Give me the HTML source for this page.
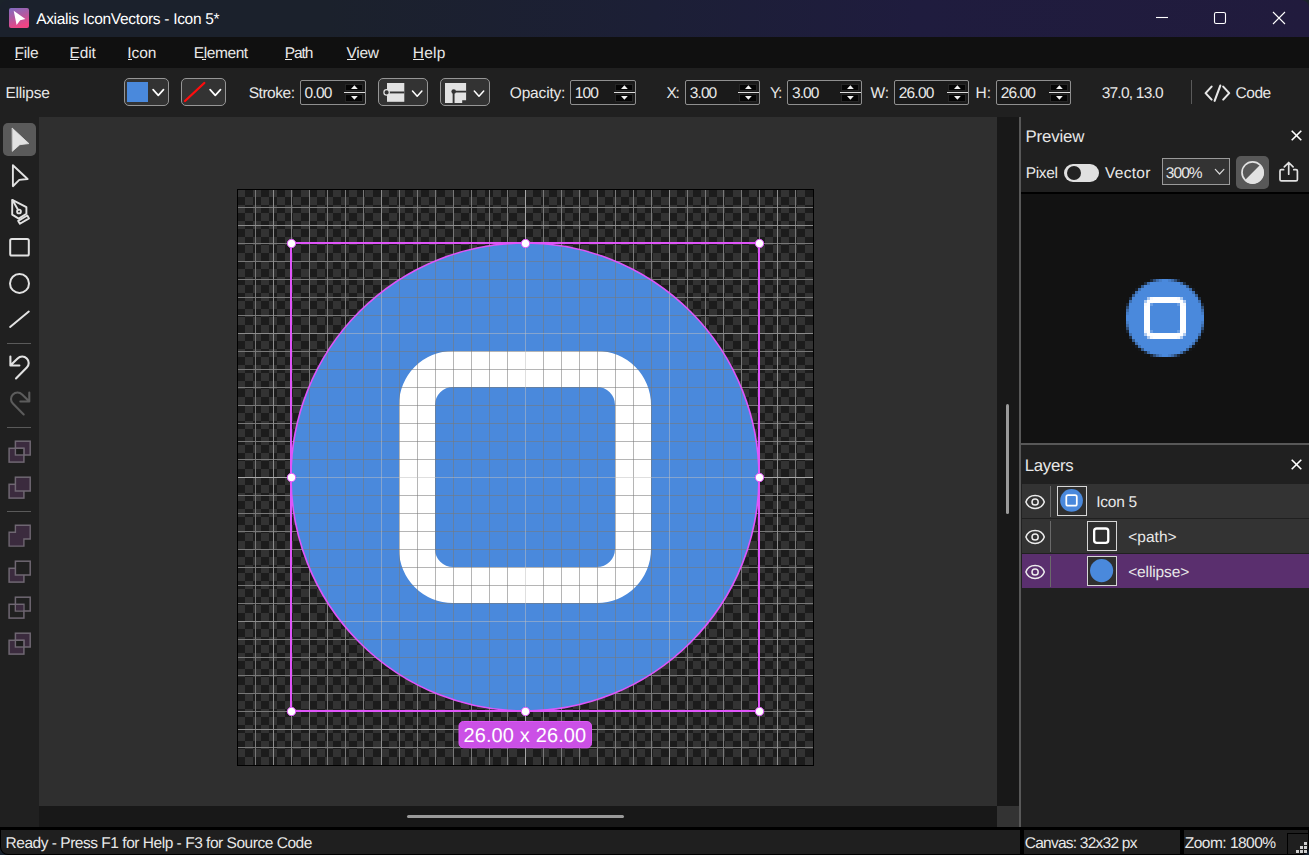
<!DOCTYPE html>
<html lang="en">
<head>
<meta charset="utf-8">
<title>Axialis IconVectors - Icon 5*</title>
<style>
html,body{margin:0;padding:0;}
body{width:1309px;height:855px;position:relative;overflow:hidden;background:#000;font-family:"Liberation Sans",sans-serif;}
.a{position:absolute;}
.tx{position:absolute;white-space:pre;line-height:20px;text-rendering:geometricPrecision;}
.tx u{text-decoration:underline;text-decoration-thickness:1px;text-underline-offset:1.5px;}
.dd{position:absolute;top:78px;height:26px;border:1px solid #969696;border-radius:5px;background:#333;}
.sp{position:absolute;top:80px;height:23px;border:1px solid #8f8f8f;border-radius:2px;background:#1a1a1a;}
.sp i{position:absolute;right:2px;width:18px;background:#050505;box-shadow:inset 0 0 0 1px #252525;}
.sp i.u{top:3px;height:7px;}
.sp i.d{top:13px;height:8px;}
.sp b{position:absolute;right:0;top:11px;width:21px;height:1px;background:#dcdcdc;}
.sp svg{position:absolute;right:2px;top:3px;}
</style>
</head>
<body>
<!-- title bar -->
<div class="a" style="left:0;top:0;width:12px;height:12px;background:#1b232b"></div><div class="a" style="left:1297px;top:0;width:12px;height:12px;background:#1b232b"></div><div class="a" style="left:0;top:843px;width:12px;height:12px;background:#1a2430"></div><div class="a" style="left:1297px;top:843px;width:12px;height:12px;background:#1a2430"></div>
<div class="a" id="titlebar" style="left:0;top:0;width:1309px;height:37px;background:linear-gradient(90deg,#1b212c 0%,#1b212c 25%,#1c1f36 50%,#1f1c3e 70%,#211b3d 100%);border-radius:8px 8px 0 0;"></div>
<svg class="a" style="left:9px;top:8px" width="20" height="20" viewBox="0 0 20 20">
<defs><linearGradient id="lg" x1="0" y1="0" x2="0.35" y2="1"><stop offset="0" stop-color="#7f6dc2"/><stop offset="0.5" stop-color="#b05aa2"/><stop offset="1" stop-color="#ee4585"/></linearGradient></defs>
<rect x="0" y="0" width="20" height="20" rx="2" fill="url(#lg)"/>
<path d="M4.7 2.7 L16.4 10.9 L11.2 12.2 L7.6 17.1 Z" fill="#fff"/>
</svg>
<!-- window buttons -->
<svg class="a" style="left:1150px;top:6px" width="150" height="26" viewBox="1150 6 150 26" fill="none" stroke="#fff" stroke-width="1.1">
<path d="M1156 17.5H1168"/>
<rect x="1214.5" y="12.5" width="11" height="11" rx="1.6"/>
<path d="M1273 12L1285 24M1285 12L1273 24"/>
</svg>
<!-- menu bar -->
<div class="a" style="left:0;top:37px;width:1309px;height:31px;background:#101010;"></div>
<!-- toolbar -->
<div class="a" style="left:0;top:68px;width:1309px;height:49px;background:#202020;"></div>
<!-- left tools -->
<div class="a" style="left:0;top:117px;width:39px;height:710px;background:#202020;"></div>
<!-- canvas area -->
<div class="a" style="left:39px;top:117px;width:958px;height:689px;background:#2f2f2f;"></div>
<!-- scrollbars -->
<div class="a" style="left:997px;top:117px;width:22px;height:689px;background:#181818;"></div>
<div class="a" style="left:39px;top:806px;width:958px;height:21px;background:#181818;"></div>
<div class="a" style="left:997px;top:806px;width:22px;height:21px;background:#333;"></div>
<div class="a" style="left:1006px;top:404px;width:3px;height:110px;background:#9a9a9a;border-radius:2px;"></div>
<div class="a" style="left:407px;top:815px;width:217px;height:3px;background:#9a9a9a;border-radius:2px;"></div>
<!-- splitter -->
<div class="a" style="left:1019px;top:117px;width:2px;height:710px;background:#585858;"></div>
<!-- right panel -->
<div class="a" style="left:1021px;top:117px;width:288px;height:710px;background:#202020;"></div>
<div class="a" style="left:1021px;top:192px;width:288px;height:2px;background:#000;"></div>
<div class="a" style="left:1021px;top:194px;width:288px;height:249px;background:#121212;"></div>
<div class="a" style="left:1021px;top:443px;width:288px;height:2px;background:#585858;"></div>
<div class="a" style="left:1064px;top:164px;width:35px;height:18px;border-radius:9px;background:#e0e0e0"></div>
<div class="a" style="left:1066.5px;top:166px;width:14px;height:14px;border-radius:7px;background:#222"></div>
<div class="a" style="left:1162px;top:158px;width:66px;height:25px;border:1px solid #9a9a9a;background:#333"></div>
<div class="a" style="left:1236px;top:156px;width:33px;height:33px;border-radius:5px;background:#585858"></div>
<svg class="a" style="left:1150px;top:120px" width="159" height="75" viewBox="1150 120 159 75" fill="none" stroke-linecap="round" stroke-linejoin="round">
<path d="M1215.3 169.39999999999998L1219.6 174.0L1223.8999999999999 169.39999999999998" fill="none" stroke="#d8d8d8" stroke-width="1.2" stroke-linecap="round" stroke-linejoin="round"/>
<path d="M1244.6 180.5A11.2 11.2 0 0 0 1260.5 164.6Z" fill="#e2e2e2"/><circle cx="1252.6" cy="172.5" r="10.6" stroke="#e2e2e2" stroke-width="1.7"/>
<path d="M1283.6 169.7H1281.4Q1280 169.7 1280 171.1V179.4Q1280 180.8 1281.4 180.8H1296Q1297.4 180.8 1297.4 179.4V171.1Q1297.4 169.7 1296 169.7H1293.8M1288.7 174.2V162.8M1284.3 166.9L1288.7 162.5L1293.1 166.9" stroke="#e2e2e2" stroke-width="1.7"/>
<path d="M1291.7 130.7L1301.3 140.3M1301.3 130.7L1291.7 140.3" stroke="#fff" stroke-width="1.6" stroke-linecap="butt"/>
</svg>
<svg class="a" style="left:1117px;top:270px" width="96" height="96" viewBox="0 0 32 32" shape-rendering="crispEdges"><rect x="11" y="3" width="1" height="1" fill="#1c2838"/><rect x="12" y="3" width="1" height="1" fill="#2f4f7a"/><rect x="13" y="3" width="1" height="1" fill="#3d6dad"/><rect x="14" y="3" width="1" height="1" fill="#457ec9"/><rect x="15" y="3" width="2" height="1" fill="#4a89dc"/><rect x="17" y="3" width="1" height="1" fill="#457ec9"/><rect x="18" y="3" width="1" height="1" fill="#3d6dad"/><rect x="19" y="3" width="1" height="1" fill="#2f4f7a"/><rect x="20" y="3" width="1" height="1" fill="#1c2838"/><rect x="9" y="4" width="1" height="1" fill="#203044"/><rect x="10" y="4" width="1" height="1" fill="#3e6fb0"/><rect x="11" y="4" width="10" height="1" fill="#4a89dc"/><rect x="21" y="4" width="1" height="1" fill="#3e6fb0"/><rect x="22" y="4" width="1" height="1" fill="#203044"/><rect x="7" y="5" width="1" height="1" fill="#15181b"/><rect x="8" y="5" width="1" height="1" fill="#345b8d"/><rect x="9" y="5" width="14" height="1" fill="#4a89dc"/><rect x="23" y="5" width="1" height="1" fill="#345b8d"/><rect x="24" y="5" width="1" height="1" fill="#15181b"/><rect x="6" y="6" width="1" height="1" fill="#171d25"/><rect x="7" y="6" width="1" height="1" fill="#3e6fb0"/><rect x="8" y="6" width="16" height="1" fill="#4a89dc"/><rect x="24" y="6" width="1" height="1" fill="#3e6fb0"/><rect x="25" y="6" width="1" height="1" fill="#171d25"/><rect x="5" y="7" width="1" height="1" fill="#15181b"/><rect x="6" y="7" width="1" height="1" fill="#3e6fb0"/><rect x="7" y="7" width="18" height="1" fill="#4a89dc"/><rect x="25" y="7" width="1" height="1" fill="#3e6fb0"/><rect x="26" y="7" width="1" height="1" fill="#15181b"/><rect x="5" y="8" width="1" height="1" fill="#345b8d"/><rect x="6" y="8" width="20" height="1" fill="#4a89dc"/><rect x="26" y="8" width="1" height="1" fill="#345b8d"/><rect x="4" y="9" width="1" height="1" fill="#203044"/><rect x="5" y="9" width="4" height="1" fill="#4a89dc"/><rect x="9" y="9" width="1" height="1" fill="#4d8bdd"/><rect x="10" y="9" width="1" height="1" fill="#b0cbf0"/><rect x="11" y="9" width="1" height="1" fill="#f7f9fd"/><rect x="12" y="9" width="8" height="1" fill="#ffffff"/><rect x="20" y="9" width="1" height="1" fill="#f7f9fd"/><rect x="21" y="9" width="1" height="1" fill="#b0cbf0"/><rect x="22" y="9" width="1" height="1" fill="#4d8bdd"/><rect x="23" y="9" width="4" height="1" fill="#4a89dc"/><rect x="27" y="9" width="1" height="1" fill="#203044"/><rect x="4" y="10" width="1" height="1" fill="#3e6fb0"/><rect x="5" y="10" width="4" height="1" fill="#4a89dc"/><rect x="9" y="10" width="1" height="1" fill="#b0cbf0"/><rect x="10" y="10" width="12" height="1" fill="#ffffff"/><rect x="22" y="10" width="1" height="1" fill="#b0cbf0"/><rect x="23" y="10" width="4" height="1" fill="#4a89dc"/><rect x="27" y="10" width="1" height="1" fill="#3e6fb0"/><rect x="3" y="11" width="1" height="1" fill="#1c2838"/><rect x="4" y="11" width="5" height="1" fill="#4a89dc"/><rect x="9" y="11" width="1" height="1" fill="#f7f9fd"/><rect x="10" y="11" width="1" height="1" fill="#ffffff"/><rect x="11" y="11" width="1" height="1" fill="#6c9fe3"/><rect x="12" y="11" width="8" height="1" fill="#4a89dc"/><rect x="20" y="11" width="1" height="1" fill="#6c9fe3"/><rect x="21" y="11" width="1" height="1" fill="#ffffff"/><rect x="22" y="11" width="1" height="1" fill="#f7f9fd"/><rect x="23" y="11" width="5" height="1" fill="#4a89dc"/><rect x="28" y="11" width="1" height="1" fill="#1c2838"/><rect x="3" y="12" width="1" height="1" fill="#2f4f7a"/><rect x="4" y="12" width="5" height="1" fill="#4a89dc"/><rect x="9" y="12" width="2" height="1" fill="#ffffff"/><rect x="11" y="12" width="10" height="1" fill="#4a89dc"/><rect x="21" y="12" width="2" height="1" fill="#ffffff"/><rect x="23" y="12" width="5" height="1" fill="#4a89dc"/><rect x="28" y="12" width="1" height="1" fill="#2f4f7a"/><rect x="3" y="13" width="1" height="1" fill="#3d6dad"/><rect x="4" y="13" width="5" height="1" fill="#4a89dc"/><rect x="9" y="13" width="2" height="1" fill="#ffffff"/><rect x="11" y="13" width="10" height="1" fill="#4a89dc"/><rect x="21" y="13" width="2" height="1" fill="#ffffff"/><rect x="23" y="13" width="5" height="1" fill="#4a89dc"/><rect x="28" y="13" width="1" height="1" fill="#3d6dad"/><rect x="3" y="14" width="1" height="1" fill="#457ec9"/><rect x="4" y="14" width="5" height="1" fill="#4a89dc"/><rect x="9" y="14" width="2" height="1" fill="#ffffff"/><rect x="11" y="14" width="10" height="1" fill="#4a89dc"/><rect x="21" y="14" width="2" height="1" fill="#ffffff"/><rect x="23" y="14" width="5" height="1" fill="#4a89dc"/><rect x="28" y="14" width="1" height="1" fill="#457ec9"/><rect x="3" y="15" width="6" height="1" fill="#4a89dc"/><rect x="9" y="15" width="2" height="1" fill="#ffffff"/><rect x="11" y="15" width="10" height="1" fill="#4a89dc"/><rect x="21" y="15" width="2" height="1" fill="#ffffff"/><rect x="23" y="15" width="6" height="1" fill="#4a89dc"/><rect x="3" y="16" width="6" height="1" fill="#4a89dc"/><rect x="9" y="16" width="2" height="1" fill="#ffffff"/><rect x="11" y="16" width="10" height="1" fill="#4a89dc"/><rect x="21" y="16" width="2" height="1" fill="#ffffff"/><rect x="23" y="16" width="6" height="1" fill="#4a89dc"/><rect x="3" y="17" width="1" height="1" fill="#457ec9"/><rect x="4" y="17" width="5" height="1" fill="#4a89dc"/><rect x="9" y="17" width="2" height="1" fill="#ffffff"/><rect x="11" y="17" width="10" height="1" fill="#4a89dc"/><rect x="21" y="17" width="2" height="1" fill="#ffffff"/><rect x="23" y="17" width="5" height="1" fill="#4a89dc"/><rect x="28" y="17" width="1" height="1" fill="#457ec9"/><rect x="3" y="18" width="1" height="1" fill="#3d6dad"/><rect x="4" y="18" width="5" height="1" fill="#4a89dc"/><rect x="9" y="18" width="2" height="1" fill="#ffffff"/><rect x="11" y="18" width="10" height="1" fill="#4a89dc"/><rect x="21" y="18" width="2" height="1" fill="#ffffff"/><rect x="23" y="18" width="5" height="1" fill="#4a89dc"/><rect x="28" y="18" width="1" height="1" fill="#3d6dad"/><rect x="3" y="19" width="1" height="1" fill="#2f4f7a"/><rect x="4" y="19" width="5" height="1" fill="#4a89dc"/><rect x="9" y="19" width="2" height="1" fill="#ffffff"/><rect x="11" y="19" width="10" height="1" fill="#4a89dc"/><rect x="21" y="19" width="2" height="1" fill="#ffffff"/><rect x="23" y="19" width="5" height="1" fill="#4a89dc"/><rect x="28" y="19" width="1" height="1" fill="#2f4f7a"/><rect x="3" y="20" width="1" height="1" fill="#1c2838"/><rect x="4" y="20" width="5" height="1" fill="#4a89dc"/><rect x="9" y="20" width="1" height="1" fill="#f7f9fd"/><rect x="10" y="20" width="1" height="1" fill="#ffffff"/><rect x="11" y="20" width="1" height="1" fill="#6c9fe3"/><rect x="12" y="20" width="8" height="1" fill="#4a89dc"/><rect x="20" y="20" width="1" height="1" fill="#6c9fe3"/><rect x="21" y="20" width="1" height="1" fill="#ffffff"/><rect x="22" y="20" width="1" height="1" fill="#f7f9fd"/><rect x="23" y="20" width="5" height="1" fill="#4a89dc"/><rect x="28" y="20" width="1" height="1" fill="#1c2838"/><rect x="4" y="21" width="1" height="1" fill="#3e6fb0"/><rect x="5" y="21" width="4" height="1" fill="#4a89dc"/><rect x="9" y="21" width="1" height="1" fill="#b0cbf0"/><rect x="10" y="21" width="12" height="1" fill="#ffffff"/><rect x="22" y="21" width="1" height="1" fill="#b0cbf0"/><rect x="23" y="21" width="4" height="1" fill="#4a89dc"/><rect x="27" y="21" width="1" height="1" fill="#3e6fb0"/><rect x="4" y="22" width="1" height="1" fill="#203044"/><rect x="5" y="22" width="4" height="1" fill="#4a89dc"/><rect x="9" y="22" width="1" height="1" fill="#4d8bdd"/><rect x="10" y="22" width="1" height="1" fill="#b0cbf0"/><rect x="11" y="22" width="1" height="1" fill="#f7f9fd"/><rect x="12" y="22" width="8" height="1" fill="#ffffff"/><rect x="20" y="22" width="1" height="1" fill="#f7f9fd"/><rect x="21" y="22" width="1" height="1" fill="#b0cbf0"/><rect x="22" y="22" width="1" height="1" fill="#4d8bdd"/><rect x="23" y="22" width="4" height="1" fill="#4a89dc"/><rect x="27" y="22" width="1" height="1" fill="#203044"/><rect x="5" y="23" width="1" height="1" fill="#345b8d"/><rect x="6" y="23" width="20" height="1" fill="#4a89dc"/><rect x="26" y="23" width="1" height="1" fill="#345b8d"/><rect x="5" y="24" width="1" height="1" fill="#15181b"/><rect x="6" y="24" width="1" height="1" fill="#3e6fb0"/><rect x="7" y="24" width="18" height="1" fill="#4a89dc"/><rect x="25" y="24" width="1" height="1" fill="#3e6fb0"/><rect x="26" y="24" width="1" height="1" fill="#15181b"/><rect x="6" y="25" width="1" height="1" fill="#171d25"/><rect x="7" y="25" width="1" height="1" fill="#3e6fb0"/><rect x="8" y="25" width="16" height="1" fill="#4a89dc"/><rect x="24" y="25" width="1" height="1" fill="#3e6fb0"/><rect x="25" y="25" width="1" height="1" fill="#171d25"/><rect x="7" y="26" width="1" height="1" fill="#15181b"/><rect x="8" y="26" width="1" height="1" fill="#345b8d"/><rect x="9" y="26" width="14" height="1" fill="#4a89dc"/><rect x="23" y="26" width="1" height="1" fill="#345b8d"/><rect x="24" y="26" width="1" height="1" fill="#15181b"/><rect x="9" y="27" width="1" height="1" fill="#203044"/><rect x="10" y="27" width="1" height="1" fill="#3e6fb0"/><rect x="11" y="27" width="10" height="1" fill="#4a89dc"/><rect x="21" y="27" width="1" height="1" fill="#3e6fb0"/><rect x="22" y="27" width="1" height="1" fill="#203044"/><rect x="11" y="28" width="1" height="1" fill="#1c2838"/><rect x="12" y="28" width="1" height="1" fill="#2f4f7a"/><rect x="13" y="28" width="1" height="1" fill="#3d6dad"/><rect x="14" y="28" width="1" height="1" fill="#457ec9"/><rect x="15" y="28" width="2" height="1" fill="#4a89dc"/><rect x="17" y="28" width="1" height="1" fill="#457ec9"/><rect x="18" y="28" width="1" height="1" fill="#3d6dad"/><rect x="19" y="28" width="1" height="1" fill="#2f4f7a"/><rect x="20" y="28" width="1" height="1" fill="#1c2838"/></svg>
<div class="a" style="left:1022px;top:484px;width:287px;height:34px;background:#333"></div>
<div class="a" style="left:1050px;top:486px;width:1px;height:31px;background:#6a6a6a"></div>
<div class="a" style="left:1022px;top:519px;width:287px;height:34px;background:#333"></div>
<div class="a" style="left:1050px;top:521px;width:1px;height:31px;background:#6a6a6a"></div>
<div class="a" style="left:1022px;top:554px;width:287px;height:34px;background:#5a2f6e"></div>
<div class="a" style="left:1050px;top:556px;width:1px;height:31px;background:#6a6a6a"></div>
<svg class="a" style="left:1021px;top:445px" width="288" height="150" viewBox="1021 445 288 150" fill="none" stroke="#ececec" stroke-width="1.5" stroke-linejoin="round">
<path d="M1025.8999999999999 502C1028.8999999999999 493.4 1041.3 493.4 1044.3 502C1041.3 510.6 1028.8999999999999 510.6 1025.8999999999999 502Z"/><circle cx="1035.1" cy="502" r="3.1"/>
<path d="M1025.8999999999999 537C1028.8999999999999 528.4 1041.3 528.4 1044.3 537C1041.3 545.6 1028.8999999999999 545.6 1025.8999999999999 537Z"/><circle cx="1035.1" cy="537" r="3.1"/>
<path d="M1025.8999999999999 572C1028.8999999999999 563.4 1041.3 563.4 1044.3 572C1041.3 580.6 1028.8999999999999 580.6 1025.8999999999999 572Z"/><circle cx="1035.1" cy="572" r="3.1"/>
<path d="M1291.7 459.7L1301.3 469.3M1301.3 459.7L1291.7 469.3" stroke="#fff" stroke-width="1.6"/>
</svg>
<svg class="a" style="left:1057px;top:486px" width="30" height="30" viewBox="0 0 30 30"><rect x="0.5" y="0.5" width="29" height="29" fill="#2f2f2f" stroke="#d6d6d6" stroke-width="1"/><g transform="translate(0.55 0.45) scale(0.875)"><circle cx="16" cy="16" r="13" fill="#4a89dc"/><rect x="10" y="10" width="12" height="12" rx="2" fill="none" stroke="#fff" stroke-width="2"/></g></svg>
<svg class="a" style="left:1087px;top:521px" width="30" height="30" viewBox="0 0 30 30"><rect x="0.5" y="0.5" width="29" height="29" fill="#2f2f2f" stroke="#d6d6d6" stroke-width="1"/><rect x="7.15" y="7.5" width="14.1" height="14.3" rx="2.6" fill="none" stroke="#fff" stroke-width="2.3"/></svg>
<svg class="a" style="left:1087px;top:556px" width="30" height="30" viewBox="0 0 30 30"><rect x="0.5" y="0.5" width="29" height="29" fill="#2f2f2f" stroke="#d6d6d6" stroke-width="1"/><circle cx="14.6" cy="14.6" r="11.6" fill="#4a89dc"/></svg>
<!-- status -->
<div class="a" style="left:0;top:827px;width:1309px;height:28px;background:#000;border-radius:0 0 8px 8px;"></div>
<div class="a" style="left:1px;top:830px;width:1019px;height:24px;background:#1f1f1f;border-radius:0 0 0 7px;"></div>
<div class="a" style="left:1024px;top:830px;width:156px;height:24px;background:#1f1f1f;"></div>
<div class="a" style="left:1184px;top:830px;width:124px;height:24px;background:#1f1f1f;border-radius:0 0 7px 0;"></div>
<div class="a" style="left:1287px;top:833px;width:21px;height:1px;background:#000"></div><div class="a" style="left:1287px;top:833px;width:1px;height:21px;background:#000"></div><svg class="a" style="left:1288px;top:834px" width="21" height="21" viewBox="1288 834 21 21" shape-rendering="crispEdges" fill="#cfcfcf"><rect x="1304" y="842" width="3" height="3"/><rect x="1300" y="846" width="3" height="3"/><rect x="1304" y="846" width="3" height="3"/><rect x="1296" y="850" width="3" height="3"/><rect x="1300" y="850" width="3" height="3"/><rect x="1304" y="850" width="3" height="3"/></svg><div class="a" style="left:15px;top:59px;width:7px;height:1px;background:#e8e8e8"></div><div class="a" style="left:70px;top:59px;width:8px;height:1px;background:#e8e8e8"></div><div class="a" style="left:128px;top:59px;width:4px;height:1px;background:#e8e8e8"></div><div class="a" style="left:202px;top:59px;width:4px;height:1px;background:#e8e8e8"></div><div class="a" style="left:285px;top:59px;width:7px;height:1px;background:#e8e8e8"></div><div class="a" style="left:347px;top:59px;width:9px;height:1px;background:#e8e8e8"></div><div class="a" style="left:413px;top:59px;width:11px;height:1px;background:#e8e8e8"></div>
<div class="dd" style="left:124px;width:43px"></div>
<div class="dd" style="left:181px;width:43px"></div>
<div class="dd" style="left:378px;width:48px"></div>
<div class="dd" style="left:440px;width:48px"></div>
<div class="sp" style="left:300px;width:64px"><i class="u"></i><i class="d"></i><b></b></div>
<div class="sp" style="left:570px;width:64px"><i class="u"></i><i class="d"></i><b></b></div>
<div class="sp" style="left:685px;width:73px"><i class="u"></i><i class="d"></i><b></b></div>
<div class="sp" style="left:787px;width:73px"><i class="u"></i><i class="d"></i><b></b></div>
<div class="sp" style="left:894px;width:73px"><i class="u"></i><i class="d"></i><b></b></div>
<div class="sp" style="left:996px;width:73px"><i class="u"></i><i class="d"></i><b></b></div>
<svg class="a" style="left:0;top:68px" width="1309" height="49" viewBox="0 68 1309 49">
<rect x="127" y="82" width="21" height="20" fill="#4a89dc"/>
<path d="M153.10000000000002 89.7L158.3 95.3L163.5 89.7" fill="none" stroke="#fff" stroke-width="1.7" stroke-linecap="round" stroke-linejoin="round"/>
<path d="M185 101L204.3 83" stroke="#ff0d0d" stroke-width="2.3" stroke-linecap="round"/>
<path d="M210.10000000000002 89.7L215.3 95.3L220.5 89.7" fill="none" stroke="#fff" stroke-width="1.7" stroke-linecap="round" stroke-linejoin="round"/>
<rect x="387" y="83" width="17.3" height="18.8" fill="#e2e2e2"/>
<rect x="387" y="91.5" width="17.3" height="1.9" fill="#333"/>
<circle cx="386.6" cy="92.4" r="2.7" fill="#333" stroke="#e2e2e2" stroke-width="1.2"/>
<path d="M412.5 91.0L417.2 96.19999999999999L421.9 91.0" fill="none" stroke="#fff" stroke-width="1.5" stroke-linecap="round" stroke-linejoin="round"/>
<path d="M445 83H466.1V100.3H462.2V103H445Z" fill="#e2e2e2"/>
<path d="M453.6 103V91.6H466.1" fill="none" stroke="#333" stroke-width="1.9"/>
<circle cx="453.7" cy="91.5" r="2.3" fill="#333"/>
<path d="M474.3 91.0L479 96.19999999999999L483.7 91.0" fill="none" stroke="#fff" stroke-width="1.5" stroke-linecap="round" stroke-linejoin="round"/>
<path d="M351.0 89L354.4 85.3L357.79999999999995 89Z M351.0 96L354.4 99.7L357.79999999999995 96Z" fill="#f0f0f0"/>
<path d="M621.0 89L624.4 85.3L627.8 89Z M621.0 96L624.4 99.7L627.8 96Z" fill="#f0f0f0"/>
<path d="M745.0 89L748.4 85.3L751.8 89Z M745.0 96L748.4 99.7L751.8 96Z" fill="#f0f0f0"/>
<path d="M847.0 89L850.4 85.3L853.8 89Z M847.0 96L850.4 99.7L853.8 96Z" fill="#f0f0f0"/>
<path d="M954.0 89L957.4 85.3L960.8 89Z M954.0 96L957.4 99.7L960.8 96Z" fill="#f0f0f0"/>
<path d="M1056.0 89L1059.4 85.3L1062.8000000000002 89Z M1056.0 96L1059.4 99.7L1062.8000000000002 96Z" fill="#f0f0f0"/>
<rect x="1191" y="80" width="1" height="24" fill="#5a5a5a"/>
<path d="M1211.6 86.6L1205.6 93.1L1211.6 99.6M1223.2 86.6L1229.2 93.1L1223.2 99.6M1220.3 85.6L1214.6 100.8" fill="none" stroke="#e6e6e6" stroke-width="2.1" stroke-linecap="round" stroke-linejoin="round"/>
</svg>
<div class="a" style="left:3px;top:123px;width:33px;height:33px;border-radius:5px;background:#5a5a5a"></div>
<svg class="a" style="left:0;top:117px" width="39" height="710" viewBox="0 117 39 710" fill="none" stroke-linecap="round" stroke-linejoin="round">
<path d="M12.4 128.3L28.9 143.6L19.8 144.7L12.6 151.1Z" fill="#e2e2e2" stroke="#e2e2e2" stroke-width="0.8"/>
<path d="M12.9 165.3L27.6 179L19.3 179.9L12.9 186.2Z" stroke="#e2e2e2" stroke-width="1.9"/>
<g stroke="#e2e2e2" stroke-width="1.9"><path d="M12.2 199.9L26.4 207.2V213.8L18.7 218.6L12.2 214.6Z"/><path d="M12.6 200.2L18 209.8"/><circle cx="19" cy="211.5" r="1.9"/><path d="M18.2 220.9L27.3 215.5L29 218.4L19.9 223.8Z"/></g>
<rect x="10.2" y="239" width="18.6" height="16.6" rx="1.6" stroke="#e2e2e2" stroke-width="2"/>
<circle cx="19.5" cy="283.4" r="9.5" stroke="#e2e2e2" stroke-width="2"/>
<path d="M10.1 326.9L28.8 311.6" stroke="#e2e2e2" stroke-width="2"/>
<path d="M7 343.5H31M7 427.5H31M7 511.5H31" stroke="#5a5a5a" stroke-width="1" stroke-linecap="butt" shape-rendering="crispEdges"/>
<path d="M10.4 356.6V365.5H19.4M10.6 365.3L17.6 358.4A6.5 6.5 0 0 1 26.8 367.6L16 378.4" stroke="#e2e2e2" stroke-width="2.1"/>
<g transform="translate(39.7 36) scale(-1 1)"><path d="M10.4 356.6V365.5H19.4M10.6 365.3L17.6 358.4A6.5 6.5 0 0 1 26.8 367.6L16 378.4" stroke="#5c5c5c" stroke-width="2.1"/></g>
<rect x="15.4" y="441.2" width="14.8" height="13.8" fill="#3b2b3e" stroke="#6f6772" stroke-width="1.5" stroke-linejoin="miter"/><rect x="9.1" y="448.3" width="14.8" height="13.8" fill="#3b2b3e" stroke="#6f6772" stroke-width="1.5" stroke-linejoin="miter"/><rect x="15.4" y="448.3" width="8.499999999999998" height="6.699999999999989" fill="#1c1c1c" stroke="#6f6772" stroke-width="1.4" stroke-linejoin="miter"/>
<rect x="9.1" y="484.3" width="14.8" height="13.8" fill="#3b2b3e" stroke="#6f6772" stroke-width="1.5" stroke-linejoin="miter"/><rect x="15.4" y="477.2" width="14.8" height="13.8" fill="#3b2b3e" stroke="#6f6772" stroke-width="1.5" stroke-linejoin="miter"/>
<path d="M15.4 525.2H30.200000000000003V539.0H23.9V546.0999999999999H9.1V532.3H15.4Z" fill="#3b2b3e" stroke="#6f6772" stroke-width="1.4" stroke-linejoin="miter"/>
<rect x="9.1" y="568.3" width="14.8" height="13.8" fill="#3b2b3e" stroke="#6f6772" stroke-width="1.5" stroke-linejoin="miter"/><rect x="15.4" y="561.2" width="14.8" height="13.8" fill="#202020" stroke="#6f6772" stroke-width="1.5" stroke-linejoin="miter"/>
<rect x="15.4" y="597.2" width="14.8" height="13.8" fill="none" stroke="#6f6772" stroke-width="1.5" stroke-linejoin="miter"/><rect x="9.1" y="604.3" width="14.8" height="13.8" fill="none" stroke="#6f6772" stroke-width="1.5" stroke-linejoin="miter"/><rect x="16.1" y="605.0" width="7.099999999999998" height="5.300000000000045" fill="#3b2b3e" stroke="none"/>
<rect x="15.4" y="633.2" width="14.8" height="13.8" fill="#3b2b3e" stroke="#6f6772" stroke-width="1.5" stroke-linejoin="miter"/><rect x="9.1" y="640.3" width="14.8" height="13.8" fill="#3b2b3e" stroke="#6f6772" stroke-width="1.5" stroke-linejoin="miter"/><rect x="15.4" y="640.3" width="8.499999999999998" height="6.7000000000000455" fill="#1c1c1c" stroke="#6f6772" stroke-width="1.4" stroke-linejoin="miter"/>
</svg>
<svg class="a" style="left:237px;top:189px" width="577" height="577" viewBox="0 0 577 577">
<defs><pattern id="chk" x="0" y="0" width="16" height="16" patternUnits="userSpaceOnUse"><rect width="16" height="16" fill="#1c1c1c"/><rect width="8" height="8" fill="#333"/><rect x="8" y="8" width="8" height="8" fill="#333"/></pattern><clipPath id="cc"><circle cx="288" cy="288" r="234"/></clipPath></defs>
<rect x="0" y="0" width="577" height="577" fill="url(#chk)"/>
<path d="M18.5 1V576M54.5 1V576M72.5 1V576M90.5 1V576M108.5 1V576M126.5 1V576M162.5 1V576M180.5 1V576M198.5 1V576M216.5 1V576M234.5 1V576M252.5 1V576M270.5 1V576M306.5 1V576M324.5 1V576M342.5 1V576M360.5 1V576M378.5 1V576M396.5 1V576M414.5 1V576M450.5 1V576M468.5 1V576M486.5 1V576M504.5 1V576M522.5 1V576M558.5 1V576M1 18.5H576M1 54.5H576M1 72.5H576M1 90.5H576M1 108.5H576M1 126.5H576M1 162.5H576M1 180.5H576M1 198.5H576M1 216.5H576M1 234.5H576M1 252.5H576M1 270.5H576M1 306.5H576M1 324.5H576M1 342.5H576M1 360.5H576M1 378.5H576M1 396.5H576M1 414.5H576M1 450.5H576M1 468.5H576M1 486.5H576M1 504.5H576M1 522.5H576M1 558.5H576" stroke="#787878" stroke-width="1" fill="none" shape-rendering="crispEdges"/><path d="M36.5 1V576M144.5 1V576M432.5 1V576M540.5 1V576M1 36.5H576M1 144.5H576M1 432.5H576M1 540.5H576" stroke="#8c8c8c" stroke-width="1" fill="none" shape-rendering="crispEdges"/><path d="M288.5 1V576M1 288.5H576" stroke="#a8a8a8" stroke-width="1" fill="none" shape-rendering="crispEdges"/>
<circle cx="288" cy="288" r="234" fill="#4a89dc"/>
<path fill="#fff" fill-rule="evenodd" d="M216 162H360A54 54 0 0 1 414 216V360A54 54 0 0 1 360 414H216A54 54 0 0 1 162 360V216A54 54 0 0 1 216 162ZM216 198H360A18 18 0 0 1 378 216V360A18 18 0 0 1 360 378H216A18 18 0 0 1 198 360V216A18 18 0 0 1 216 198Z"/>
<g clip-path="url(#cc)"><path d="M18.5 1V576M54.5 1V576M72.5 1V576M90.5 1V576M108.5 1V576M126.5 1V576M162.5 1V576M180.5 1V576M198.5 1V576M216.5 1V576M234.5 1V576M252.5 1V576M270.5 1V576M306.5 1V576M324.5 1V576M342.5 1V576M360.5 1V576M378.5 1V576M396.5 1V576M414.5 1V576M450.5 1V576M468.5 1V576M486.5 1V576M504.5 1V576M522.5 1V576M558.5 1V576" stroke="#787878" stroke-opacity="0.55" stroke-width="1" fill="none" shape-rendering="crispEdges"/><path d="M1 18.5H576M1 54.5H576M1 72.5H576M1 90.5H576M1 108.5H576M1 126.5H576M1 162.5H576M1 180.5H576M1 198.5H576M1 216.5H576M1 234.5H576M1 252.5H576M1 270.5H576M1 306.5H576M1 324.5H576M1 342.5H576M1 360.5H576M1 378.5H576M1 396.5H576M1 414.5H576M1 450.5H576M1 468.5H576M1 486.5H576M1 504.5H576M1 522.5H576M1 558.5H576" stroke="#787878" stroke-opacity="0.55" stroke-width="1" fill="none" shape-rendering="crispEdges"/><path d="M36.5 1V576M144.5 1V576M432.5 1V576M540.5 1V576M288.5 1V576" stroke="#c0c0c0" stroke-opacity="0.5" stroke-width="1" fill="none" shape-rendering="crispEdges"/><path d="M1 36.5H576M1 144.5H576M1 432.5H576M1 540.5H576M1 288.5H576" stroke="#c0c0c0" stroke-opacity="0.5" stroke-width="1" fill="none" shape-rendering="crispEdges"/></g>
<rect x="0.5" y="0.5" width="576" height="576" fill="none" stroke="#000" stroke-width="1"/>
<circle cx="288" cy="288" r="234" fill="none" stroke="#df55f9" stroke-width="1.6"/>
<rect x="54" y="54" width="468" height="468" fill="none" stroke="#df55f9" stroke-width="2"/>
<circle cx="54.5" cy="54.5" r="4.2" fill="#fff" stroke="#df55f9" stroke-width="1"/>
<circle cx="288.5" cy="54.5" r="4.2" fill="#fff" stroke="#df55f9" stroke-width="1"/>
<circle cx="522.5" cy="54.5" r="4.2" fill="#fff" stroke="#df55f9" stroke-width="1"/>
<circle cx="54.5" cy="288.5" r="4.2" fill="#fff" stroke="#df55f9" stroke-width="1"/>
<circle cx="522.5" cy="288.5" r="4.2" fill="#fff" stroke="#df55f9" stroke-width="1"/>
<circle cx="54.5" cy="522.5" r="4.2" fill="#fff" stroke="#df55f9" stroke-width="1"/>
<circle cx="288.5" cy="522.5" r="4.2" fill="#fff" stroke="#df55f9" stroke-width="1"/>
<circle cx="522.5" cy="522.5" r="4.2" fill="#fff" stroke="#df55f9" stroke-width="1"/>
<rect x="222" y="532.5" width="132.5" height="26.3" rx="4.5" fill="#cb50e6" stroke="#df55f9" stroke-width="1"/>
</svg>
<span class="tx" style="left:36.15px;top:10px;font-size:15.5px;letter-spacing:-0.312px;color:#ffffff">Axialis IconVectors - Icon 5*</span>
<span class="tx" style="left:14.53px;top:44px;font-size:15.5px;letter-spacing:-0.325px;color:#e8e8e8">File</span>
<span class="tx" style="left:69.43px;top:44px;font-size:15.5px;letter-spacing:-0.069px;color:#e8e8e8">Edit</span>
<span class="tx" style="left:127.18px;top:44px;font-size:15.5px;letter-spacing:-0.027px;color:#e8e8e8">Icon</span>
<span class="tx" style="left:193.73px;top:44px;font-size:15.5px;letter-spacing:-0.401px;color:#e8e8e8">Element</span>
<span class="tx" style="left:284.73px;top:44px;font-size:15.5px;letter-spacing:-1.067px;color:#e8e8e8">Path</span>
<span class="tx" style="left:346.60px;top:44px;font-size:15.5px;letter-spacing:-0.313px;color:#e8e8e8">View</span>
<span class="tx" style="left:412.73px;top:44px;font-size:15.5px;letter-spacing:0.242px;color:#e8e8e8">Help</span>
<span class="tx" style="left:5.53px;top:84px;font-size:15.5px;letter-spacing:-0.234px;color:#e8e8e8">Ellipse</span>
<span class="tx" style="left:248.67px;top:84px;font-size:15.5px;letter-spacing:-0.453px;color:#e8e8e8">Stroke:</span>
<span class="tx" style="left:304.52px;top:84px;font-size:15.5px;letter-spacing:-0.753px;color:#e8e8e8">0.00</span>
<span class="tx" style="left:509.81px;top:84px;font-size:15.5px;letter-spacing:-0.177px;color:#e8e8e8">Opacity:</span>
<span class="tx" style="left:574.78px;top:84px;font-size:15.5px;letter-spacing:-0.852px;color:#e8e8e8">100</span>
<span class="tx" style="left:666.56px;top:84px;font-size:15.5px;letter-spacing:-1.278px;color:#e8e8e8">X:</span>
<span class="tx" style="left:689.78px;top:84px;font-size:15.5px;letter-spacing:-0.907px;color:#e8e8e8">3.00</span>
<span class="tx" style="left:769.95px;top:84px;font-size:15.5px;letter-spacing:-1.478px;color:#e8e8e8">Y:</span>
<span class="tx" style="left:792.08px;top:84px;font-size:15.5px;letter-spacing:-0.974px;color:#e8e8e8">3.00</span>
<span class="tx" style="left:870.62px;top:84px;font-size:15.5px;letter-spacing:-0.141px;color:#e8e8e8">W:</span>
<span class="tx" style="left:898.68px;top:84px;font-size:15.5px;letter-spacing:-0.775px;color:#e8e8e8">26.00</span>
<span class="tx" style="left:975.53px;top:84px;font-size:15.5px;letter-spacing:0.157px;color:#e8e8e8">H:</span>
<span class="tx" style="left:1000.78px;top:84px;font-size:15.5px;letter-spacing:-0.9px;color:#e8e8e8">26.00</span>
<span class="tx" style="left:1101.68px;top:84px;font-size:15.5px;letter-spacing:-0.778px;color:#e8e8e8">37.0, 13.0</span>
<span class="tx" style="left:1235.48px;top:84px;font-size:15.5px;letter-spacing:-0.452px;color:#e8e8e8">Code</span>
<span class="tx" style="left:1025.54px;top:127px;font-size:16.8px;letter-spacing:-0.141px;color:#e8e8e8">Preview</span>
<span class="tx" style="left:1025.63px;top:164px;font-size:15.5px;letter-spacing:-0.294px;color:#e8e8e8">Pixel</span>
<span class="tx" style="left:1105.10px;top:164px;font-size:15.5px;letter-spacing:0.268px;color:#e8e8e8">Vector</span>
<span class="tx" style="left:1165.68px;top:164px;font-size:15.5px;letter-spacing:-0.889px;color:#e8e8e8">300%</span>
<span class="tx" style="left:1024.84px;top:456px;font-size:16.8px;letter-spacing:-0.333px;color:#e8e8e8">Layers</span>
<span class="tx" style="left:1096.18px;top:493px;font-size:15.5px;letter-spacing:-0.238px;color:#e8e8e8">Icon 5</span>
<span class="tx" style="left:1128.16px;top:528px;font-size:15.5px;letter-spacing:0.042px;color:#e8e8e8">&lt;path&gt;</span>
<span class="tx" style="left:1128.16px;top:563px;font-size:15.5px;letter-spacing:-0.121px;color:#e8e8e8">&lt;ellipse&gt;</span>
<span class="tx" style="left:5.53px;top:834px;font-size:15.5px;letter-spacing:-0.476px;color:#e8e8e8">Ready - Press F1 for Help - F3 for Source Code</span>
<span class="tx" style="left:1024.78px;top:834px;font-size:15.5px;letter-spacing:-0.761px;color:#e8e8e8">Canvas: 32x32 px</span>
<span class="tx" style="left:1184.85px;top:834px;font-size:15.5px;letter-spacing:-0.533px;color:#e8e8e8">Zoom: 1800%</span>
<span class="tx" style="left:463.41px;top:726px;font-size:20px;letter-spacing:0.135px;color:#ffffff">26.00 x 26.00</span>
</body>
</html>
